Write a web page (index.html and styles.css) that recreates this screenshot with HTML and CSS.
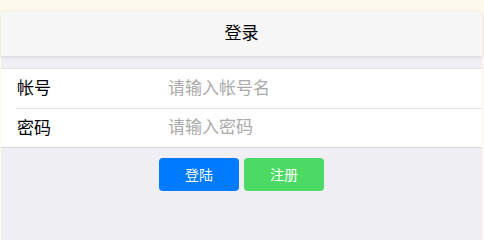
FILE: index.html
```html
<!DOCTYPE html>
<html lang="zh-CN">
<head>
<meta charset="utf-8">
<title>登录</title>
<link rel="stylesheet" href="styles.css">
</head>
<body>
<div class="app">
  <header class="bar">
    <h1 class="title">登录</h1>
  </header>
  <main class="content">
    <form class="group">
      <div class="row">
        <label class="label">帐号</label>
        <input class="field" type="text" placeholder="请输入帐号名">
      </div>
      <div class="row">
        <label class="label">密码</label>
        <input class="field" type="password" placeholder="请输入密码">
      </div>
    </form>
    <div class="actions">
      <button class="btn btn-blue" type="button">登陆</button>
      <button class="btn btn-green" type="button">注册</button>
    </div>
  </main>
</div>
</body>
</html>
```

FILE: styles.css
```css
html, body {
  margin: 0;
  padding: 0;
}
body {
  background: #fdf9ec;
  font-family: "Noto Sans CJK SC", "Noto Sans", sans-serif;
  padding: 12px 2px 0 1px;
  height: 100vh;
  box-sizing: border-box;
  overflow: hidden;
  display: flex;
  flex-direction: column;
}
.app {
  flex: 1;
  background: #efeff4;
  display: flex;
  flex-direction: column;
}
.bar {
  height: 44px;
  box-sizing: border-box;
  padding-bottom: 6px;
  background: #f7f7f7;
  box-shadow: 0 1px 4px rgba(0, 0, 0, 0.12);
  display: flex;
  align-items: center;
  justify-content: center;
  position: relative;
  z-index: 1;
  flex: none;
}
.title {
  margin: 0;
  font-size: 17px;
  line-height: 1;
  font-weight: normal;
  color: #000;
}
.content {
  padding-top: 12px;
}
.group {
  margin: 0;
  background: #fff;
  border-top: 1px solid #e2e2e6;
  border-bottom: 1px solid #d8d8dc;
}
.row {
  display: flex;
  align-items: center;
  height: 39px;
  box-sizing: border-box;
  padding-bottom: 4px;
  margin-left: 15px;
}
.row + .row {
  height: 39px;
  border-top: 1px solid #e2e2e6;
}
.label {
  flex: 0 0 152px;
  font-size: 17px;
  line-height: 1;
  color: #000;
  padding-left: 1px;
  box-sizing: border-box;
}
.field {
  flex: 1;
  border: 0;
  outline: none;
  background: transparent;
  padding: 0;
  font-family: inherit;
  font-size: 17px;
  line-height: 20px;
  color: #000;
}
.field::placeholder {
  color: #aaa;
}
.actions {
  display: flex;
  justify-content: center;
  gap: 5px;
  margin-top: 10px;
}
.btn {
  width: 80px;
  height: 33px;
  border: 0;
  border-radius: 4px;
  color: #fff;
  font-family: inherit;
  font-size: 14px;
  padding: 0 0 2px;
}
.btn-blue {
  background: #007aff;
}
.btn-green {
  background: #4cd964;
}
```
